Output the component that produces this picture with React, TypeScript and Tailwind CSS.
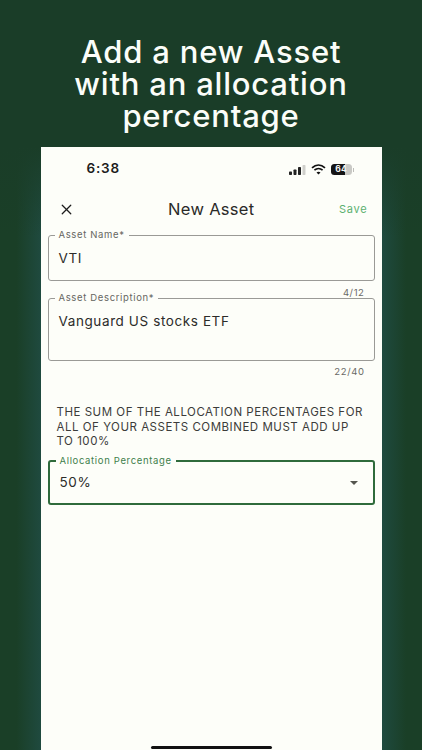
import { X } from "lucide-react";

function OutlinedField({
  label,
  value,
  heightClass,
  focused,
  valueClass,
  children,
}: {
  label: string;
  value: string;
  heightClass: string;
  focused?: boolean;
  valueClass: string;
  children?: React.ReactNode;
}) {
  return (
    <div
      className={`relative mx-[7px] rounded-[3px] ${heightClass} ${
        focused ? "border-2 border-[#2f6b3c]" : "border border-[#9a9a96]"
      }`}
    >
      <span
        className={`absolute left-[6px] top-[-8px] bg-[#fdfef9] px-[4px] text-[9.5px] leading-[14px] tracking-[0.65px] ${
          focused ? "text-[#3d7f4c]" : "text-[#666662]"
        }`}
      >
        {label}
      </span>
      <div className={`pl-[10px] text-[13.5px] leading-[18px] tracking-[0.6px] text-[#2c2c2a] ${valueClass}`}>
        {value}
      </div>
      {children}
    </div>
  );
}

function StatusIcons() {
  return (
    <div className="flex items-center gap-[5px]">
      <svg width="17" height="10" viewBox="0 0 17 10">
        <rect x="0" y="6.5" width="3" height="3.5" rx="0.7" fill="#222" />
        <rect x="4.5" y="4.5" width="3" height="5.5" rx="0.7" fill="#222" />
        <rect x="9" y="2" width="3" height="8" rx="0.7" fill="#222" />
        <rect x="13.5" y="0" width="3" height="10" rx="0.7" fill="#cfcfcb" />
      </svg>
      <svg width="15" height="11" viewBox="0 0 15 11" fill="none" stroke="#111" strokeWidth="1.7">
        <path d="M1 3.8C5 0.3 10 0.3 14 3.8" />
        <path d="M3.4 6.2C5.8 4.1 9.2 4.1 11.6 6.2" />
        <path d="M7.5 10.6L5.5 8.4C6.7 7.5 8.3 7.5 9.5 8.4Z" fill="#111" stroke="none" />
      </svg>
      <div className="flex items-center">
        <div className="relative h-[11px] w-[21px] overflow-hidden rounded-[3.5px] bg-[#c9c9c5]">
          <div className="h-full w-[14px] bg-[#151515]" />
          <span className="absolute inset-0 text-center text-[8.5px] font-bold leading-[11px] text-[#f4f4f0]">64</span>
        </div>
        <div className="ml-[1px] h-[4px] w-[1px] bg-[#bdbdb9]" />
      </div>
    </div>
  );
}

export default function App() {
  return (
    <div className="flex h-[750px] w-[422px] flex-col items-center overflow-hidden bg-[#1a3d28] font-['Inter',sans-serif]">
      <h1 className="mt-[36px] w-full text-center text-[31px] font-medium leading-[32px] tracking-[0.8px] text-[#fbfdf9]">
        Add a new Asset
        <br />
        with an allocation
        <br />
        percentage
      </h1>

      <div className="relative mt-[15px] flex w-full flex-1 justify-center">
        {/* soft glow beside the phone, fades in going down */}
        <div className="absolute inset-0 flex justify-between">
          <div className="h-full w-[41px] bg-gradient-to-r from-[#1a3f27] from-40% to-[#1f4a3f]" />
          <div className="h-full w-[40px] bg-gradient-to-l from-[#1a3f27] from-40% to-[#1f4a3f]" />
        </div>
        <div className="absolute inset-x-0 top-0 h-[90px] bg-gradient-to-b from-[#1a3d28] to-transparent" />

        <div className="relative flex w-[341px] flex-col bg-[#fdfef9]">
          {/* status bar */}
          <div className="flex h-[30px] items-end justify-between pl-[46px] pr-[28px]">
            <span className="text-[13.5px] font-semibold leading-[18px] tracking-[0.8px] text-[#1c1c1c]">6:38</span>
            <div className="mb-[2px]">
              <StatusIcons />
            </div>
          </div>

          {/* nav bar */}
          <div className="mt-[22px] flex h-[20px] items-center justify-between pl-[17px] pr-[14px]">
            <X size={17} strokeWidth={1.8} color="#1c1c1c" />
            <span className="ml-[9px] text-[16.5px] leading-[20px] tracking-[0.3px] text-[#2a2a28]">New Asset</span>
            <span className="text-[11px] tracking-[0.75px] text-[#5cb070]">Save</span>
          </div>

          <div className="mt-[16px]">
            <OutlinedField label="Asset Name*" value="VTI" heightClass="h-[46px]" valueClass="pt-[13px]" />
          </div>
          <div className="-mb-[1px] mt-[6px] pr-[17px] text-right text-[9.5px] leading-[12px] tracking-[0.6px] text-[#6a6a66]">
            4/12
          </div>

          <OutlinedField
            label="Asset Description*"
            value="Vanguard US stocks ETF"
            heightClass="h-[63px]"
            valueClass="pt-[13px]"
          />
          <div className="mt-[5px] pr-[17px] text-right text-[9.5px] leading-[12px] tracking-[0.6px] text-[#6a6a66]">
            22/40
          </div>

          <p className="mt-[27px] px-[16px] text-[11.5px] leading-[14.5px] tracking-[0.52px] text-[#3c3c3a]">
            THE SUM OF THE ALLOCATION PERCENTAGES FOR ALL OF YOUR ASSETS COMBINED MUST ADD UP TO 100%
          </p>

          <div className="mt-[11px]">
            <OutlinedField
              label="Allocation Percentage"
              value="50%"
              heightClass="h-[45px]"
              focused
              valueClass="pt-[11px]"
            >
              <div className="absolute right-[15px] top-[19px] h-0 w-0 border-x-[4.5px] border-t-[4.5px] border-x-transparent border-t-[#55554f]" />
            </OutlinedField>
          </div>

          {/* home indicator */}
          <div className="mb-[1px] mt-auto flex justify-center">
            <div className="h-[3px] w-[121px] rounded-full bg-[#111]" />
          </div>
        </div>
      </div>
    </div>
  );
}
